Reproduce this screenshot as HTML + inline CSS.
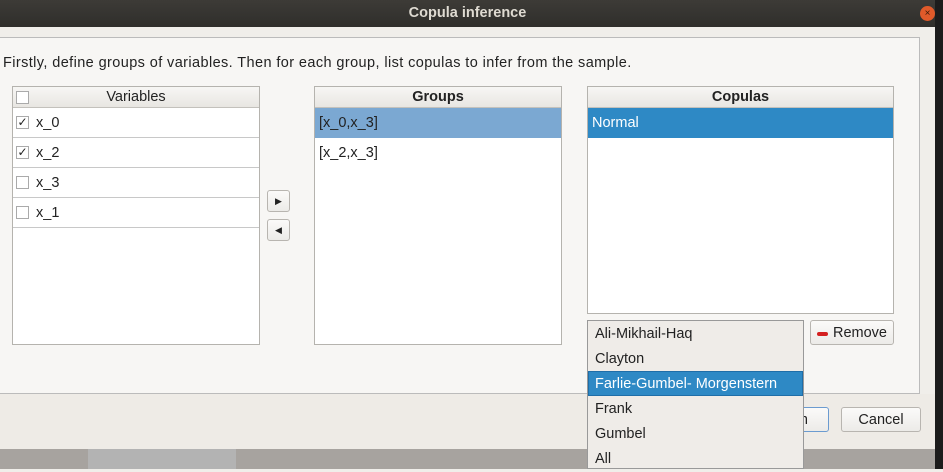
<!DOCTYPE html>
<html><head><style>
*{box-sizing:border-box;margin:0;padding:0}
body{width:943px;height:469px;overflow:hidden;background:#f0eeea;font-family:"Liberation Sans","DejaVu Sans",sans-serif;font-size:14.5px;color:#222;position:relative}
.abs{position:absolute}
.title{left:0;top:0;width:935px;height:27px;background:linear-gradient(#3d3b37,#2f2e2b);color:#dfdbd2;font-weight:bold;text-align:center;line-height:26px;font-size:14.5px}
.close{left:920px;top:6px;width:15px;height:15px;border-radius:50%;background:#e05a2a;color:#3a1a0a;font-size:10px;text-align:center;line-height:15px}
.rightblk{left:935px;top:0;width:8px;height:469px;background:#1c1c1c}
.panel{left:0;top:37px;width:920px;height:357px;background:#f7f6f4;border:1px solid #bbb;border-left:none}
.list{background:#fff;border:1px solid #b5b3ae}
.hdr{height:21px;background:linear-gradient(#f7f6f4,#e8e6e2);border-bottom:1px solid #c3c1bc;text-align:center;line-height:21px}
.row{height:30px;border-bottom:1px solid #c8c8c8;line-height:31px;padding-left:23px;position:relative}
.cb{position:absolute;left:3px;top:8px;width:13px;height:13px;border:1px solid #aaa;background:#fff;font-size:12px;line-height:11px;text-align:center}
.btn{background:linear-gradient(#fbfaf9,#ecebe8);border:1px solid #b8b5b0;border-radius:3px}
.sel{background:#2e89c5;color:#fff}
</style></head><body>
<div class="abs title" style="line-height:27px">Copula inference</div>
<div class="abs close">×</div>
<div class="abs rightblk"></div>
<div class="abs panel"></div>
<div class="abs" style="left:3px;top:55px;letter-spacing:0.4px">Firstly, define groups of variables. Then for each group, list copulas to infer from the sample.</div>
<div class="abs list" style="left:12px;top:86px;width:248px;height:259px">
 <div class="hdr" style="position:relative"><span class="cb" style="top:4px"></span>Variables</div>
 <div class="row"><span class="cb">✓</span>x_0</div>
 <div class="row"><span class="cb">✓</span>x_2</div>
 <div class="row"><span class="cb"></span>x_3</div>
 <div class="row"><span class="cb"></span>x_1</div>
</div>
<div class="abs btn" style="left:267px;top:190px;width:23px;height:22px;font-size:9px;text-align:center;line-height:20px">▶</div>
<div class="abs btn" style="left:267px;top:219px;width:23px;height:22px;font-size:9px;text-align:center;line-height:20px">◀</div>
<div class="abs list" style="left:314px;top:86px;width:248px;height:259px">
 <div class="hdr" style="font-weight:bold">Groups</div>
 <div style="height:30px;line-height:31px;padding-left:4px;background:#7ba8d2;color:#222">[x_0,x_3]</div>
 <div style="height:30px;line-height:31px;padding-left:4px">[x_2,x_3]</div>
</div>
<div class="abs list" style="left:587px;top:86px;width:307px;height:228px">
 <div class="hdr" style="font-weight:bold">Copulas</div>
 <div class="sel" style="height:30px;line-height:31px;padding-left:4px">Normal</div>
</div>
<div class="abs btn" style="left:810px;top:320px;width:84px;height:25px;line-height:25px;padding-left:22px"><span style="position:absolute;left:6px;top:11px;width:11px;height:4px;background:#d42020;border-radius:2px"></span>Remove</div>
<div class="abs" style="left:0;top:394px;width:935px;height:55px;background:#eeebe6"></div>
<div class="abs btn" style="left:760px;top:407px;width:69px;height:25px;border-color:#6b9bd0;line-height:25px;text-align:right;padding-right:20px">n</div>
<div class="abs btn" style="left:841px;top:407px;width:80px;height:25px;text-align:center;line-height:25px">Cancel</div>
<div class="abs" style="left:0;top:449px;width:935px;height:20px;background:#a7a39f"></div>
<div class="abs" style="left:88px;top:449px;width:148px;height:20px;background:#b3b3b3"></div>
<div class="abs" style="left:587px;top:320px;width:217px;height:149px;background:#efece8;border:1px solid #999">
 <div style="height:25px;line-height:26px;padding-left:7px">Ali-Mikhail-Haq</div>
 <div style="height:25px;line-height:26px;padding-left:7px">Clayton</div>
 <div class="sel" style="height:25px;line-height:24px;padding-left:6px;border:1px solid #1f6ea8">Farlie-Gumbel- Morgenstern</div>
 <div style="height:25px;line-height:26px;padding-left:7px">Frank</div>
 <div style="height:25px;line-height:26px;padding-left:7px">Gumbel</div>
 <div style="height:25px;line-height:26px;padding-left:7px">All</div>
</div>
</body></html>
